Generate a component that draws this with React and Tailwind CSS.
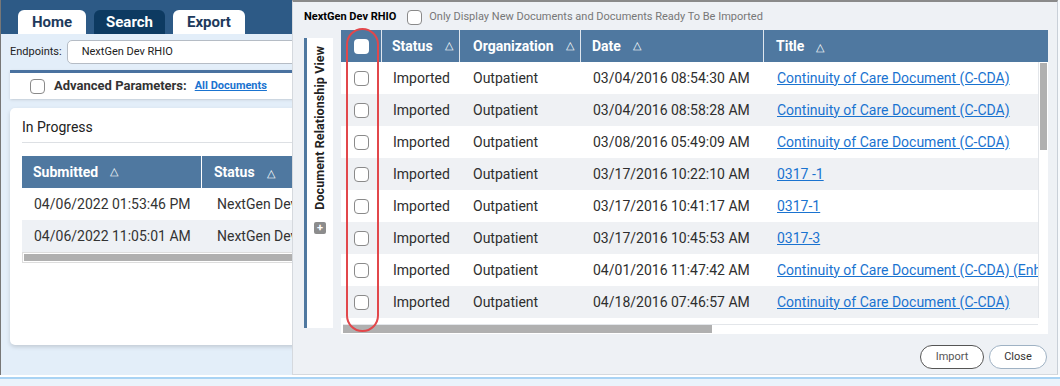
import React from 'react';

const docs = [
  { date: '03/04/2016 08:54:30 AM', title: 'Continuity of Care Document (C-CDA)' },
  { date: '03/04/2016 08:58:28 AM', title: 'Continuity of Care Document (C-CDA)' },
  { date: '03/08/2016 05:49:09 AM', title: 'Continuity of Care Document (C-CDA)' },
  { date: '03/17/2016 10:22:10 AM', title: '0317 -1' },
  { date: '03/17/2016 10:41:17 AM', title: '0317-1' },
  { date: '03/17/2016 10:45:53 AM', title: '0317-3' },
  { date: '04/01/2016 11:47:42 AM', title: 'Continuity of Care Document (C-CDA) (Enhanced)' },
  { date: '04/18/2016 07:46:57 AM', title: 'Continuity of Care Document (C-CDA)' },
];

const jobs = [
  { submitted: '04/06/2022 01:53:46 PM', status: 'NextGen Dev RHIO' },
  { submitted: '04/06/2022 11:05:01 AM', status: 'NextGen Dev RHIO' },
];

const Box = ({ className = '' }) => (
  <span className={`block w-[15px] h-[15px] rounded-[4px] border border-[#8a8a8a] bg-white ${className}`} />
);

const Sort = () => <span className="text-[11px] font-normal ml-3">△</span>;

const App = () => {
  return (
    <div className="w-[1060px] h-[386px] overflow-hidden flex flex-col bg-[#eaf3fb] font-['Roboto',sans-serif] text-[#333]">
      <div className="flex h-[375px]">
        {/* page behind the dialog */}
        <div className="w-[292px] shrink-0 overflow-hidden border-l border-[#777] bg-[#e3eef9] flex flex-col">
          <div className="h-[34px] bg-[#2d5a86] flex items-end pl-[17px] gap-2">
            <div className="w-[68px] h-[24px] rounded-t-[6px] bg-white text-[#1d3a5c] font-bold text-[15px] flex items-center justify-center">Home</div>
            <div className="w-[71px] h-[24px] rounded-t-[6px] bg-[#0d3a61] text-white font-bold text-[15px] flex items-center justify-center">Search</div>
            <div className="w-[72px] h-[24px] rounded-t-[6px] bg-white text-[#1d3a5c] font-bold text-[15px] flex items-center justify-center">Export</div>
          </div>
          <div className="h-[36px] flex items-center pl-[9px] gap-[5px]">
            <span className="text-[11px] text-[#222]">Endpoints:</span>
            <div className="w-[240px] h-[24px] shrink-0 bg-white border border-[#b5bcc5] rounded-[5px] flex items-center pl-[14px] text-[11px] text-[#222]">NextGen Dev RHIO</div>
          </div>
          <div className="ml-[9px] w-[300px] border-t-[3px] border-[#4a72a0] bg-white h-[29px] flex items-center pl-[20px] shadow-sm">
            <Box className="mr-[9px]" />
            <span className="text-[13px] font-bold text-[#333]">Advanced Parameters:</span>
            <span className="ml-2 text-[11px] font-bold text-[#1a73d0] underline">All Documents</span>
          </div>
          <div className="ml-[9px] mt-[9px] w-[300px] h-[237px] bg-white rounded-[5px] shadow-[0_2px_4px_rgba(0,0,0,0.15)] pl-[12px] pt-[9px]">
            <div className="text-[14px] text-[#222] h-[26px] border-b border-[#dde0e4]">In Progress</div>
            <div className="mt-[13px] h-[32px] bg-[#4f78a0] text-white font-bold text-[14px] flex items-center whitespace-nowrap">
              <div className="w-[180px] shrink-0 pl-[11px] h-full flex items-center border-r border-white">Submitted<Sort /></div>
              <div className="shrink-0 pl-[12px]">Status<Sort /></div>
            </div>
            {jobs.map((j, i) => (
              <div key={i} className={`h-[32px] flex items-center text-[14px] text-[#333] whitespace-nowrap ${i % 2 ? 'bg-[#eef1f5]' : 'bg-white'}`}>
                <div className="w-[180px] shrink-0 pl-[12px]">{j.submitted}</div>
                <div className="shrink-0 pl-[15px]">{j.status}</div>
              </div>
            ))}
            <div className="h-[11px] border border-[#ddd] p-[1px]"><div className="h-full bg-[#b0b0b0]" /></div>
          </div>
        </div>

        {/* dialog */}
        <div className="relative w-[766px] shrink-0 bg-[#eef1f5] border-t-2 border-[#8a8a8a] border-l border-r border-b border-l-[#d5d9de] border-r-[#c9d0d8] border-b-[#d5d9de] flex flex-col pl-[11px] pr-[9px]">
          <div className="h-[28px] flex items-center gap-[7px] pt-[2px]">
            <span className="text-[11px] font-bold text-black">NextGen Dev RHIO</span>
            <Box className="ml-[4px]" />
            <span className="text-[11px] text-[#777]">Only Display New Documents and Documents Ready To Be Imported</span>
          </div>
          <div className="flex gap-[8px]">
            <div className="mt-[8px] w-[29px] h-[290px] bg-white border-l-[3px] border-[#4f78a0] flex flex-col items-center pt-[8px]">
              <span className="[writing-mode:vertical-rl] rotate-180 text-[12.5px] leading-[16px] tracking-[0.1px] font-bold text-[#222] whitespace-nowrap">Document Relationship View</span>
              <span className="mt-[12px] w-[12px] h-[12px] rounded-[2px] bg-[#8c8c8c] text-white text-[11px] leading-[12px] text-center font-bold">+</span>
            </div>
            <div className="w-[707px] flex flex-col">
              <div className="h-[32px] bg-[#4f78a0] text-white font-bold text-[14px] flex items-center">
                <div className="w-[41px] h-full flex items-center justify-center border-r border-[#dfe6ee]">
                  <span className="block w-[15px] h-[15px] rounded-[4px] bg-white" />
                </div>
                <div className="w-[78px] h-full flex items-center pl-[10px] border-r border-[#dfe6ee]">Status<Sort /></div>
                <div className="w-[121px] h-full flex items-center pl-[13px] border-r border-[#dfe6ee]">Organization<Sort /></div>
                <div className="w-[183px] h-full flex items-center pl-[11px] border-r border-[#dfe6ee]">Date<Sort /></div>
                <div className="flex-1 pl-[12px]">Title<Sort /></div>
              </div>
              <div className="flex bg-white">
                <div className="w-[697px] overflow-hidden">
                  {docs.map((d, i) => (
                    <div key={i} className={`h-[32px] flex items-center text-[14px] text-[#2e2e2e] whitespace-nowrap ${i % 2 ? 'bg-[#eff1f4]' : 'bg-white'}`}>
                      <div className="w-[41px] shrink-0 flex justify-center"><Box /></div>
                      <div className="w-[78px] shrink-0 pl-[11px]">Imported</div>
                      <div className="w-[121px] shrink-0 pl-[13px]">Outpatient</div>
                      <div className="w-[183px] shrink-0 pl-[12px]">{d.date}</div>
                      <div className="shrink-0 pl-[13px] text-[#1a73d0] underline">{d.title}</div>
                    </div>
                  ))}
                </div>
                <div className="w-[10px] border-l border-[#e3e6ea] pt-[1px] pl-[1px] pr-[1px]">
                  <div className="h-[87px] bg-[#b0b0b0]" />
                </div>
              </div>
              <div className="h-[16px] bg-white flex items-end pl-[2px] pr-[10px] pb-[1px]">
                <div className="flex-1 h-[9px] border-t border-[#e3e6ea] bg-white">
                  <div className="w-[369px] h-full bg-[#b0b0b0]" />
                </div>
              </div>
            </div>
          </div>
          <div className="flex justify-end gap-[5px] mt-[11px] pr-[1px]">
            <button className="w-[64px] h-[24px] rounded-full border border-[#555] bg-white text-[11px] text-[#555]">Import</button>
            <button className="w-[58px] h-[24px] rounded-full border border-[#9fb2c4] bg-white text-[11px] text-[#333]">Close</button>
          </div>
          {/* annotation */}
          <div className="absolute left-[53px] top-[26px] w-[33px] h-[304px] rounded-full border-2 border-[#e2474b] pointer-events-none" />
        </div>
        <div className="flex-1 bg-[#f7fafd]" />
      </div>
      <div className="h-[2px] bg-white" />
      <div className="h-[2px] bg-[#a9d3f4]" />
      <div className="flex-1 bg-[#eaf3fb]" />
    </div>
  );
};

export default App;
